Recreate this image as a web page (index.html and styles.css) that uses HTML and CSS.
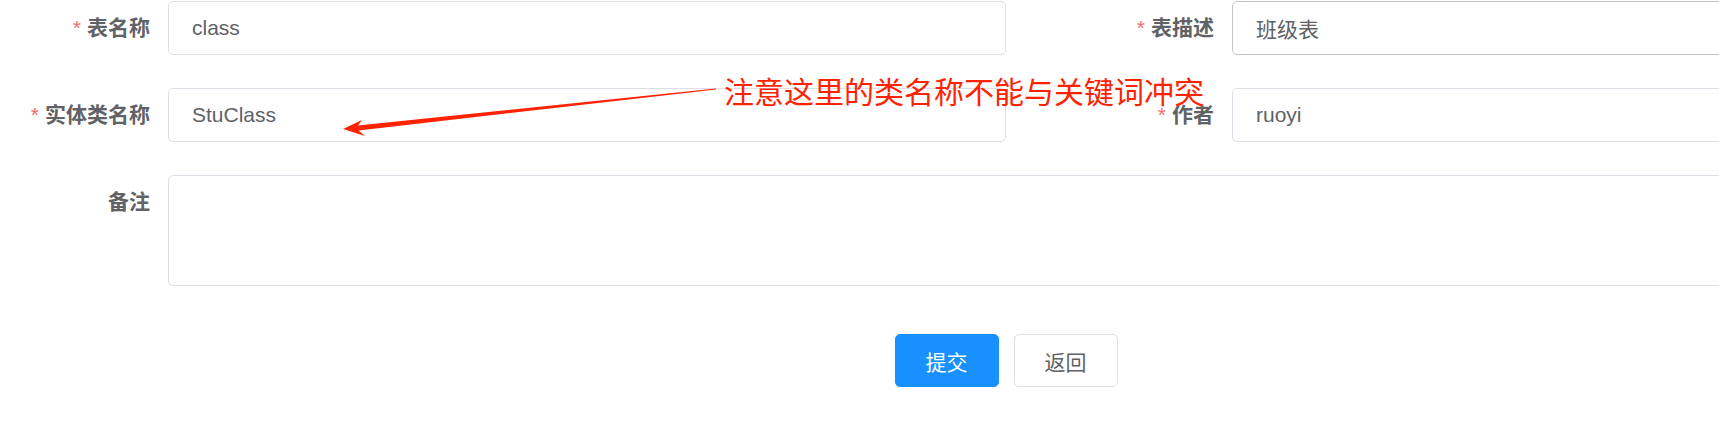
FILE: index.html
```html
<!DOCTYPE html>
<html lang="zh-CN">
<head>
    <meta charset="UTF-8">
    <meta name="viewport" content="width=device-width, initial-scale=1.0">
    <title>基本信息</title>
    <link rel="stylesheet" href="styles.css">
</head>
<body>
    <form class="gen-form">
        <div class="form-row">
            <div class="form-item col-left">
                <label class="item-label required">表名称</label>
                <input class="item-input" type="text" value="class">
            </div>
            <div class="form-item col-right">
                <label class="item-label required">表描述</label>
                <input class="item-input is-hover" type="text" value="班级表">
            </div>
        </div>

        <div class="form-row">
            <div class="form-item col-left">
                <label class="item-label required">实体类名称</label>
                <input class="item-input" type="text" value="StuClass">
            </div>
            <div class="form-item col-right">
                <label class="item-label required">作者</label>
                <input class="item-input" type="text" value="ruoyi">
            </div>
        </div>

        <div class="form-item">
            <label class="item-label">备注</label>
            <textarea class="item-textarea"></textarea>
        </div>

        <div class="form-actions">
            <button type="button" class="btn btn-primary">提交</button>
            <button type="button" class="btn">返回</button>
        </div>
    </form>

    <!-- annotation drawn over the screenshot -->
    <svg class="note-arrow" width="760" height="150" viewBox="0 0 760 150">
        <polygon points="343,129 362,120 358,125.4 716,88.5 716,89.5 358.6,130.4 365,136" fill="#ff2200"/>
    </svg>
    <div class="note-text">注意这里的类名称不能与关键词冲突</div>
</body>
</html>
```

FILE: styles.css
```css
/* element-ui look, scaled up */
body {
    margin: 0;
    overflow: hidden;
    background-color: #ffffff;
    color: #606266;
    font-family: "Liberation Sans", "Noto Sans CJK SC", sans-serif;
}

.gen-form {
    width: 2012px;
    padding-top: 1px;
}

.form-row {
    display: grid;
    grid-template-columns: 1064px 1fr;
}

.form-item {
    display: flex;
    margin-bottom: 33px;
}

.col-left {
    padding-right: 58px;
}

.item-label {
    flex: 0 0 168px;
    box-sizing: border-box;
    padding-right: 18px;
    text-align: right;
    font-size: 21px;
    font-weight: bold;
    line-height: 54px;
    color: #606266;
}

.item-label.required::before {
    content: "*";
    color: #f56c6c;
    margin-right: 6px;
    font-weight: normal;
}

.item-input,
.item-textarea {
    flex: 1;
    min-width: 0;
    box-sizing: border-box;
    margin: 0;
    border: 1px solid #dcdfe6;
    border-radius: 5px;
    background-color: #ffffff;
    color: #606266;
    font-family: "Liberation Sans", "Noto Sans CJK SC", sans-serif;
    font-size: 21px;
    outline: none;
}

.item-input {
    height: 54px;
    padding: 0 23px;
}

.item-input.is-hover {
    border-color: #c0c4cc;
}

.item-textarea {
    height: 111px;
    resize: none;
    padding: 8px 23px;
}

.form-actions {
    display: flex;
    justify-content: center;
    gap: 15px;
    padding-top: 15px;
}

.btn {
    width: 104px;
    height: 53px;
    box-sizing: border-box;
    border: 1px solid #dcdfe6;
    border-radius: 5px;
    background-color: #ffffff;
    color: #606266;
    font-family: "Noto Sans CJK SC", sans-serif;
    font-size: 21px;
    cursor: pointer;
}

.btn-primary {
    background-color: #1890ff;
    border-color: #1890ff;
    color: #ffffff;
}

.note-arrow {
    position: absolute;
    left: 0;
    top: 0;
}

.note-text {
    position: absolute;
    left: 724px;
    top: 75px;
    font-family: "Noto Sans CJK SC", sans-serif;
    font-size: 30px;
    line-height: 30px;
    color: #ff2200;
    white-space: nowrap;
}
```
